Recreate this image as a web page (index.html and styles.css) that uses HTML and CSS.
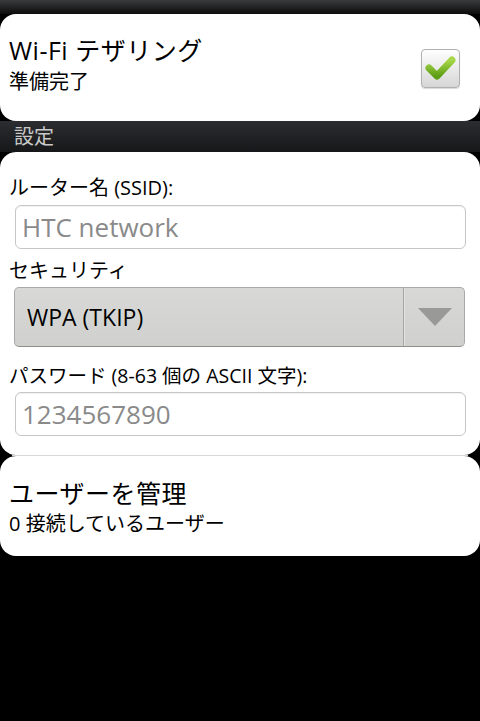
FILE: index.html
```html
<!DOCTYPE html>
<html>
<head>
    <meta charset="utf-8">
    <title>Wi-Fi テザリング</title>
    <link rel="stylesheet" href="styles.css">
</head>
<body>
    <div class="top-bar"></div>

    <!-- Tethering on/off -->
    <div class="card card-toggle">
        <div class="item-text">
            <div class="item-title">Wi-Fi テザリング</div>
            <div class="item-sub">準備完了</div>
        </div>
        <div class="checkbox">
            <svg width="39" height="39" viewBox="0 0 39 39">
                <defs>
                    <linearGradient id="tick" x1="0" y1="0" x2="0" y2="1">
                        <stop offset="0" stop-color="#a8d84a"/>
                        <stop offset="1" stop-color="#5e9e16"/>
                    </linearGradient>
                </defs>
                <path d="M8 19 L16 27 L31 11" fill="none" stroke="url(#tick)" stroke-width="7" stroke-linecap="round" stroke-linejoin="round"/>
            </svg>
        </div>
    </div>

    <div class="section-header">設定</div>

    <!-- Settings form -->
    <div class="card card-form">
        <div class="field-label">ルーター名 (SSID):</div>
        <input class="text-field" type="text" placeholder="HTC network">

        <div class="field-label label-security">セキュリティ</div>
        <div class="spinner">
            <span class="spinner-text">WPA (TKIP)</span>
            <span class="spinner-arrow"><span class="triangle"></span></span>
        </div>

        <div class="field-label label-password">パスワード (8-63 個の ASCII 文字):</div>
        <input class="text-field" type="text" placeholder="1234567890">
    </div>

    <div class="divider"></div>

    <!-- Connected users -->
    <div class="card card-users">
        <div class="item-title">ユーザーを管理</div>
        <div class="item-sub">0 接続しているユーザー</div>
    </div>
</body>
</html>
```

FILE: styles.css
```css
body {
    margin: 0;
    background-color: #000;
    font-family: "Open Sans", "Noto Sans CJK JP", sans-serif;
    color: #000;
}
.top-bar {
    height: 14px;
    background: linear-gradient(#3a3b3d, #0c0c0c);
}
.card {
    background-color: #fff;
    border-radius: 16px;
}
.card-toggle {
    height: 107px;
    box-sizing: border-box;
    display: flex;
    justify-content: space-between;
    align-items: flex-start;
    padding: 21px 20px 0 9px;
}
.item-title {
    font-size: 25px;
    line-height: 30px;
    letter-spacing: 0.5px;
}
.item-sub {
    font-size: 20px;
    line-height: 24px;
}
.card-toggle .item-sub {
    margin-top: 5px;
}
.checkbox {
    width: 37px;
    height: 37px;
    margin-top: 14px;
    border: 1px solid #b0b0b0;
    border-radius: 4px;
    background: linear-gradient(#fefefe, #d6d6d6);
    box-shadow: 0 1px 1px rgba(0, 0, 0, 0.15);
}
.checkbox svg {
    display: block;
    margin: -1px;
}
.section-header {
    height: 31px;
    line-height: 31px;
    padding-left: 14px;
    font-size: 20px;
    color: #c9c9c9;
    background: linear-gradient(#2c2d30, #161719);
}
.card-form {
    padding: 23px 14px 19px 15px;
}
.field-label {
    font-size: 20px;
    line-height: 26px;
    margin-left: -6px;
    margin-bottom: 4px;
}
.label-security {
    margin-top: 9px;
    margin-bottom: 3px;
}
.label-password {
    margin-top: 16px;
    margin-bottom: 3px;
    font-size: 19.5px;
}
.text-field {
    display: block;
    width: 100%;
    height: 44px;
    box-sizing: border-box;
    margin: 0;
    padding: 0 6px;
    border: 1px solid #c6c6c6;
    border-radius: 6px;
    background-color: #fff;
    box-shadow: inset 0 1px 1px rgba(0, 0, 0, 0.06);
    font-family: "Open Sans", "Noto Sans CJK JP", sans-serif;
    font-size: 26px;
    color: #000;
    outline: none;
}
.text-field::placeholder {
    color: #8a8a8a;
}
.spinner {
    display: flex;
    height: 60px;
    box-sizing: border-box;
    margin-left: -1px;
    margin-right: 1px;
    border: 1px solid #a9aaa7;
    border-bottom-color: #8e8f8c;
    border-radius: 5px;
    background: linear-gradient(#d8d9d6, #d0d1ce);
}
.spinner-text {
    flex: 1;
    display: flex;
    align-items: center;
    padding-left: 12px;
    font-size: 23px;
    border-right: 1px solid #a6a7a4;
}
.spinner-arrow {
    width: 59px;
    display: flex;
    align-items: center;
    justify-content: center;
    border-left: 1px solid #e2e3e0;
}
.triangle {
    width: 0;
    height: 0;
    border-left: 17px solid transparent;
    border-right: 17px solid transparent;
    border-top: 18px solid #999a98;
}
.divider {
    height: 1px;
    margin: 0 12px;
    background-color: #d8d8d8;
}
.card-users {
    padding: 22px 9px 20px;
}
.card-users .item-sub {
    margin-top: 4px;
}
```
